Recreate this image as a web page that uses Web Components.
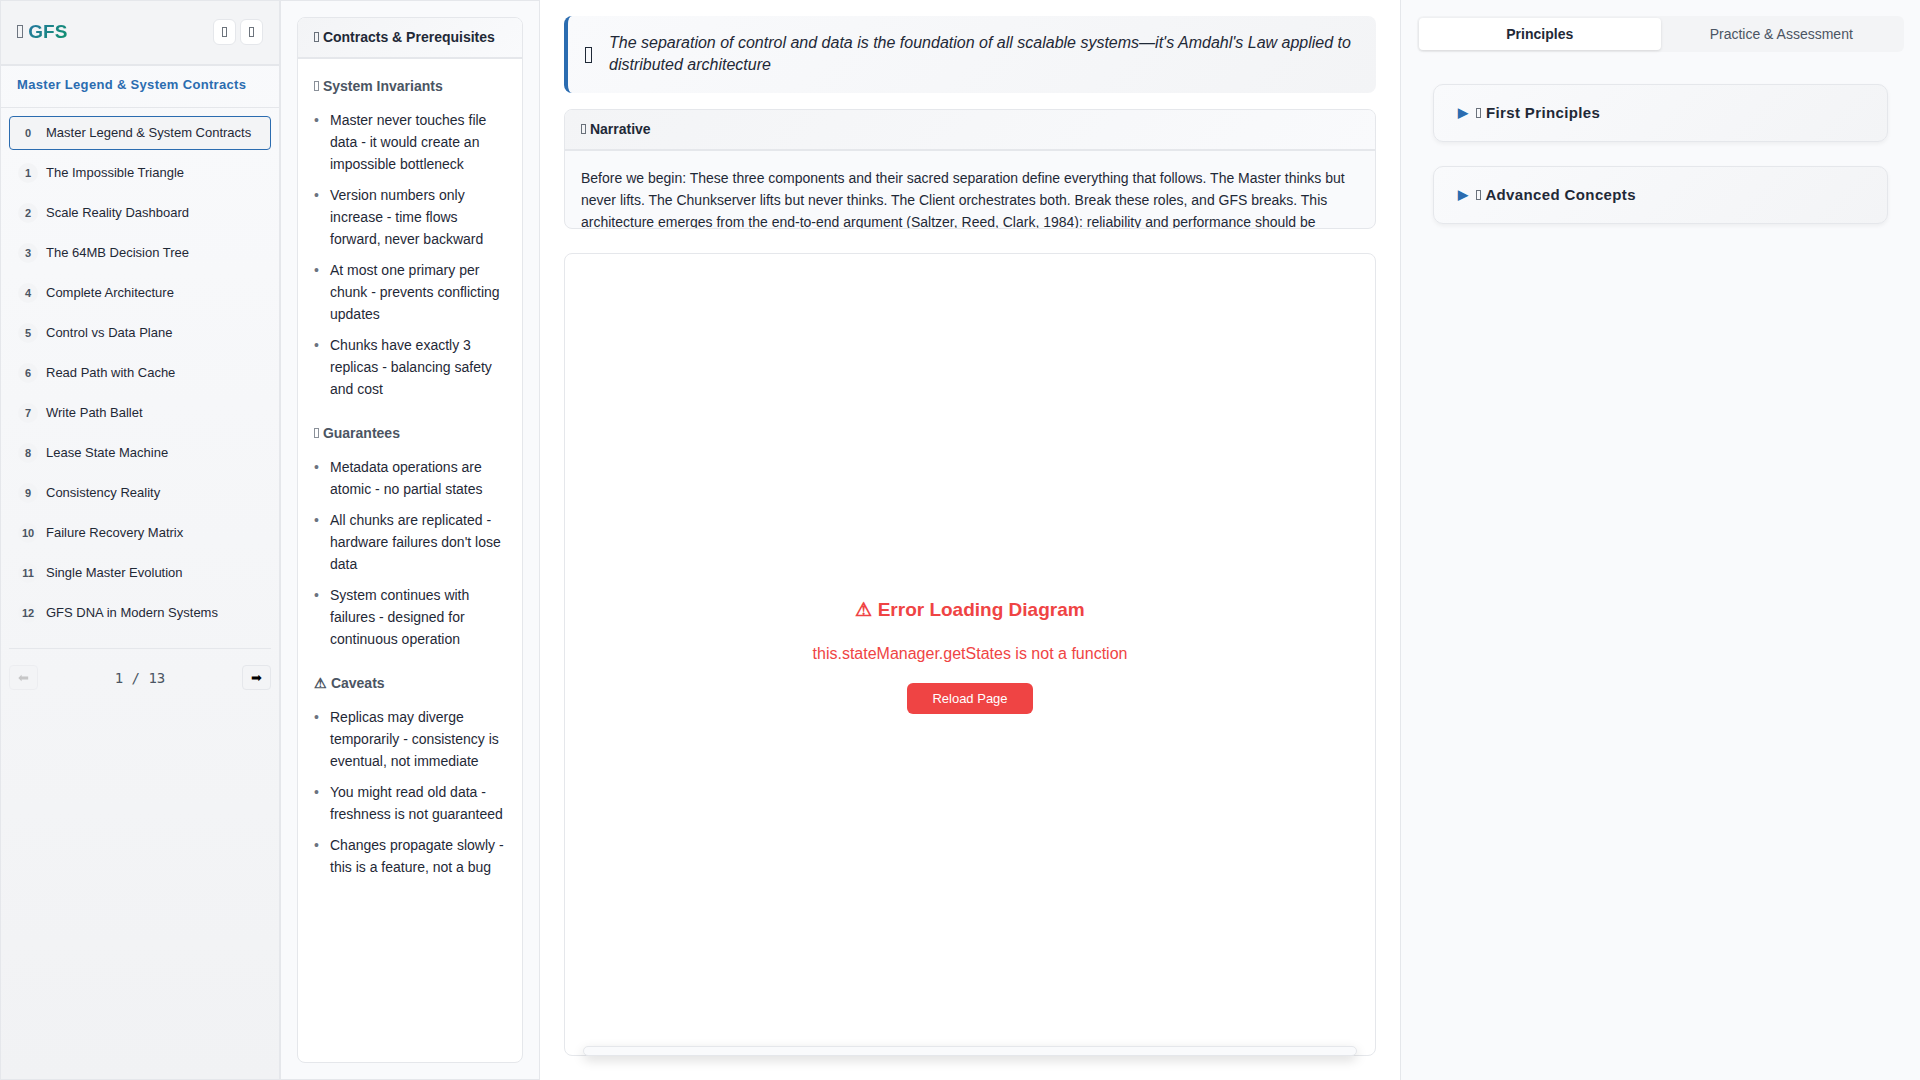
<!DOCTYPE html>
<html lang="en">
<head>
<meta charset="utf-8">
<title>GFS - Master Legend &amp; System Contracts</title>
<style>
:root {
  --ink: #1f2937; --muted: #4b5563; --soft: #6b7280; --line: #e5e7eb;
  --surface: #f9fafc; --raised: #f3f4f6; --blue: #2b6cb0; --red: #ef4444;
}
html, body { height: 100%; }
body { margin: 0; font: 14px/22px "Liberation Sans", Arial, sans-serif; color: var(--ink); background: #fff; }
</style>
</head>
<body>
<gfs-app>
  <gfs-sidebar slot="nav"></gfs-sidebar>
  <gfs-panel slot="contracts" heading="Contracts &amp; Prerequisites">
    <gfs-contract icon="box" heading="System Invariants" items="Master never touches file data - it would create an impossible bottleneck|Version numbers only increase - time flows forward, never backward|At most one primary per chunk - prevents conflicting updates|Chunks have exactly 3 replicas - balancing safety and cost"></gfs-contract>
    <gfs-contract icon="box" heading="Guarantees" items="Metadata operations are atomic - no partial states|All chunks are replicated - hardware failures don't lose data|System continues with failures - designed for continuous operation"></gfs-contract>
    <gfs-contract heading="⚠ Caveats" items="Replicas may diverge temporarily - consistency is eventual, not immediate|You might read old data - freshness is not guaranteed|Changes propagate slowly - this is a feature, not a bug"></gfs-contract>
  </gfs-panel>
  <gfs-insight slot="main">The separation of control and data is the foundation of all scalable systems—it's Amdahl's Law applied to distributed architecture</gfs-insight>
  <gfs-panel slot="main" class="narrative" heading="Narrative">Before we begin: These three components and their sacred separation define everything that follows. The Master thinks but never lifts. The Chunkserver lifts but never thinks. The Client orchestrates both. Break these roles, and GFS breaks. This architecture emerges from the end-to-end argument (Saltzer, Reed, Clark, 1984): reliability and performance should be</gfs-panel>
  <gfs-diagram slot="main"></gfs-diagram>
  <gfs-tabs slot="aside"></gfs-tabs>
  <gfs-fold slot="aside">First Principles</gfs-fold>
  <gfs-fold slot="aside">Advanced Concepts</gfs-fold>
</gfs-app>
<script>
const BASE = ':host,*,*::before,*::after{box-sizing:border-box}h1,h2,h3,p,ul,ol{margin:0;padding:0}ul,ol{list-style:none}button{font-family:inherit;cursor:pointer}';
const define = (name, render) => customElements.define(name, class extends HTMLElement {
  constructor() {
    super();
    this.attachShadow({ mode: 'open' });
  }
  connectedCallback() {
    this.shadowRoot.innerHTML = `<style>${BASE}</style>` + render(this);
  }
});

// Empty upright box used as the icon glyph; the default size sits in headings, "l" in the logo, "xl" in the insight.
define('gfs-glyph', () => `<style>
:host { display: inline-block; width: 5px; height: 10px; border: 1px solid currentColor; opacity: .65; }
:host([size=l]) { width: 6px; height: 13px; border-color: #4b5563; opacity: .8; }
:host([size=xl]) { flex: none; width: 7px; height: 16px; margin: 0 1px; opacity: 1; }
</style>`);

define('gfs-app', () => `<style>
:host { display: grid; grid-template-columns: 280px 260px minmax(0, 1fr) 520px; height: 100vh; min-height: 760px; }
nav, .contracts { border: 1px solid var(--line); min-height: 0; }
nav { background: linear-gradient(180deg, var(--surface), #f1f2f4); }
.contracts { background: var(--surface); padding: 16px; display: grid; }
main { display: flex; flex-direction: column; gap: 16px; padding: 16px 24px 24px; min-width: 0; min-height: 0; }
::slotted(.narrative) { flex: 0 0 120px; --panel-bg: var(--surface); }
aside { border-left: 1px solid var(--line); background: var(--surface); padding: 16px; }
</style>
<nav><slot name="nav"></slot></nav>
<section class="contracts"><slot name="contracts"></slot></section>
<main><slot name="main"></slot></main>
<aside><slot name="aside"></slot></aside>`);

const sections = ['Master Legend & System Contracts', 'The Impossible Triangle', 'Scale Reality Dashboard', 'The 64MB Decision Tree', 'Complete Architecture', 'Control vs Data Plane', 'Read Path with Cache', 'Write Path Ballet', 'Lease State Machine', 'Consistency Reality', 'Failure Recovery Matrix', 'Single Master Evolution', 'GFS DNA in Modern Systems'];
define('gfs-sidebar', () => `<style>
:host { display: block; }
header { display: flex; align-items: center; justify-content: space-between; height: 65px; padding: 0 16px 2px; background: var(--raised); border-bottom: 2px solid var(--line); }
h1 { font-size: 19px; line-height: 32px; color: transparent; background: linear-gradient(135deg, var(--blue), #0d9668); background-clip: text; -webkit-background-clip: text; }
.tools { display: flex; gap: 4px; }
.tools button { display: grid; place-items: center; width: 23px; height: 26px; padding: 0; color: var(--ink); background: #fff; border: 1px solid var(--line); border-radius: 6px; }
h2 { height: 42px; padding: 8px 16px; font-size: 13px; line-height: 22px; letter-spacing: 0.025em; color: var(--blue); border-bottom: 1px solid var(--line); }
ol { display: grid; gap: 6px; padding: 8px; }
a { display: flex; align-items: center; gap: 8px; height: 34px; padding: 0 8px; border: 1px solid transparent; border-radius: 4px; font-size: 13px; color: var(--ink); text-decoration: none; }
a[aria-current] { border-color: var(--blue); background: var(--raised); }
.num { width: 20px; height: 20px; border-radius: 50%; background: var(--raised); color: var(--muted); font-size: 11px; line-height: 20px; font-weight: bold; text-align: center; }
footer { display: flex; align-items: center; justify-content: space-between; margin: 10px 8px 0; padding-top: 16px; border-top: 1px solid var(--line); }
footer button { width: 29px; height: 25px; padding: 0; font-size: 13px; color: #000; background: var(--raised); border: 1px solid var(--line); border-radius: 4px; }
footer button:disabled { opacity: .5; color: #999; }
output { font: 14px/22px "DejaVu Sans Mono", monospace; color: var(--muted); }
</style>
<header><h1><gfs-glyph size="l"></gfs-glyph> GFS</h1><div class="tools"><button aria-label="Theme"><gfs-glyph></gfs-glyph></button><button aria-label="Search"><gfs-glyph></gfs-glyph></button></div></header>
<h2>Master Legend &amp; System Contracts</h2>
<ol>${sections.map((s, i) => `<li><a href="#s${i}" ${i ? '' : 'aria-current="page"'}><span class="num">${i}</span><span>${s.replace('&', '&amp;')}</span></a></li>`).join('')}</ol>
<footer><button disabled aria-label="Previous">⬅</button><output>1 / 13</output><button aria-label="Next">➡</button></footer>`);

define('gfs-panel', el => `<style>
:host { display: flex; flex-direction: column; min-height: 0; overflow: hidden; border: 1px solid var(--line); border-radius: 8px; background: var(--panel-bg, #fff); }
h2 { flex: none; padding: 8px 16px 9px; font-size: 14px; line-height: 22px; background: linear-gradient(135deg, var(--raised), var(--surface)); border-bottom: 2px solid var(--line); }
.body { padding: 16px; min-height: 0; overflow: hidden; }
</style>
<h2><gfs-glyph></gfs-glyph> ${el.getAttribute('heading').replace('&', '&amp;')}</h2><div class="body"><slot></slot></div>`);

define('gfs-contract', el => `<style>
:host { display: block; margin-bottom: 22px; }
h3 { margin-bottom: 12px; font-size: 14px; line-height: 22px; color: var(--muted); }
ul { display: grid; gap: 9px; }
li { display: flex; }
li::before { content: "•"; flex: 0 0 16px; color: var(--soft); }
</style>
<h3>${el.hasAttribute('icon') ? '<gfs-glyph></gfs-glyph> ' : ''}${el.getAttribute('heading')}</h3><ul>${el.getAttribute('items').split('|').map(t => `<li><span>${t}</span></li>`).join('')}</ul>`);

define('gfs-insight', () => `<style>
:host { display: flex; flex: none; align-items: flex-start; gap: 16px; min-height: 77px; padding: 16px; border-left: 4px solid var(--blue); border-radius: 8px; background: linear-gradient(135deg, var(--surface), #f3f4f6); }
gfs-glyph { align-self: center; }
p { font-size: 16px; line-height: 22px; font-style: italic; }
</style>
<gfs-glyph size="xl"></gfs-glyph><p><slot></slot></p>`);

define('gfs-diagram', () => `<style>
:host { position: relative; display: flex; flex: 1; flex-direction: column; align-items: center; justify-content: center; gap: 16px; margin-top: 8px; border: 1px solid var(--line); border-radius: 8px; background: #fff; color: var(--red); }
h3 { font-size: 19px; line-height: 30px; }
p { font-size: 16px; line-height: 26px; }
button { height: 31px; padding: 0 25px; font-size: 13px; color: #fff; background: var(--red); border: 0; border-radius: 6px; }
.dock { position: absolute; left: 18px; right: 18px; bottom: -1px; height: 10px; border: 1px solid var(--line); border-radius: 6px; background: var(--surface); box-shadow: 0 4px 12px rgba(0, 0, 0, .15); }
</style>
<h3>⚠ Error Loading Diagram</h3><p>this.stateManager.getStates is not a function</p><button>Reload Page</button><div class="dock"></div>`);

define('gfs-tabs', () => `<style>
:host { display: flex; margin-bottom: 32px; padding: 2px; border-radius: 6px; background: var(--raised); }
button { flex: 1; height: 32px; padding: 0; border: 0; border-radius: 4px; background: none; color: var(--muted); font-size: 14px; }
button[aria-selected=true] { background: #fff; color: var(--ink); font-weight: bold; box-shadow: 0 1px 3px rgba(0, 0, 0, .12); }
</style>
<button role="tab" aria-selected="true">Principles</button><button role="tab" aria-selected="false">Practice &amp; Assessment</button>`);

define('gfs-fold', () => `<style>
:host { display: block; margin: 0 16px 24px; }
details { border: 1px solid var(--line); border-radius: 10px; background: linear-gradient(135deg, var(--surface), #f3f4f6); box-shadow: 0 2px 4px rgba(0, 0, 0, .05); }
summary { display: flex; align-items: center; gap: 8px; padding: 16px 24px; font-size: 15px; line-height: 24px; font-weight: bold; letter-spacing: 0.025em; list-style: none; cursor: pointer; }
summary::before { content: "▶"; font-size: 13px; color: var(--blue); }
</style>
<details><summary><span><gfs-glyph></gfs-glyph> <slot></slot></span></summary></details>`);
</script>
</body>
</html>
